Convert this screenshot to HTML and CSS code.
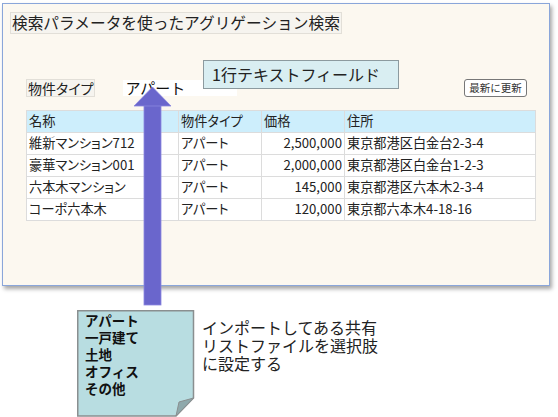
FILE: index.html
```html
<!DOCTYPE html>
<html lang="ja">
<head>
  <meta charset="UTF-8">
  <title>検索パラメータを使ったアグリゲーション検索</title>
  <link rel="stylesheet" href="styles.css">
</head>
<body>
  <!-- 画面パネル -->
  <div class="panel">
    <div class="title">検索パラメータを使ったアグリゲーション検索</div>

    <div class="search-row">
      <span class="label">物件タイプ</span>
      <span class="field">アパート</span>
      <button class="refresh">最新に更新</button>
    </div>

    <table class="result">
      <colgroup>
        <col class="c-name"><col class="c-type"><col class="c-price"><col class="c-addr">
      </colgroup>
      <thead>
        <tr><th>名称</th><th>物件タイプ</th><th>価格</th><th>住所</th></tr>
      </thead>
      <tbody>
        <tr><td>維新マンション712</td><td>アパート</td><td class="num">2,500,000</td><td>東京都港区白金台2-3-4</td></tr>
        <tr><td>豪華マンション001</td><td>アパート</td><td class="num">2,000,000</td><td>東京都港区白金台1-2-3</td></tr>
        <tr><td>六本木マンション</td><td>アパート</td><td class="num">145,000</td><td>東京都港区六本木2-3-4</td></tr>
        <tr><td>コーポ六本木</td><td>アパート</td><td class="num">120,000</td><td>東京都六本木4-18-16</td></tr>
      </tbody>
    </table>

    <!-- 吹き出し -->
    <div class="hint">1行テキストフィールド</div>
  </div>

  <!-- 矢印 -->
  <svg class="arrow" width="558" height="417" viewBox="0 0 558 417">
    <rect x="144" y="105" width="17" height="200" fill="#6a66cc" stroke="#8c88e0" stroke-width="0.8"/>
    <polygon points="152.5,87 134,106 171,106" fill="#6a66cc" stroke="#8c88e0" stroke-width="0.8"/>
  </svg>

  <div class="bottom">
    <div class="note">
      <svg class="note-shape" width="118" height="107" viewBox="0 0 118 107">
        <polygon points="0.75,0.75 116.5,0.75 116.5,88 99,106 0.75,106" fill="#b8dde1" stroke="#8a8f90" stroke-width="1.5"/>
        <polygon points="116.5,88 102,92 99,106" fill="#8fa9ac" stroke="#8a8f90" stroke-width="1"/>
      </svg>
      <div class="note-text">アパート<br>一戸建て<br>土地<br>オフィス<br>その他</div>
    </div>
    <p class="caption">インポートしてある共有<br>リストファイルを選択肢<br>に設定する</p>
  </div>
</body>
</html>
```

FILE: styles.css
```css
/* Grundlayout */
body, html {
  margin: 0;
  padding: 0;
  background: #fff;
}

body {
  width: 558px;
  height: 417px;
  overflow: hidden;
  position: relative;
  font-family: "Noto Sans CJK JP", "Noto Sans", sans-serif;
  color: #222;
}

/* Fenster */
.panel {
  position: relative;
  box-sizing: border-box;
  margin: 3px 0 0 2px;
  width: 548px;
  height: 283px;
  border: 1.5px solid #8aa6da;
  background: #fcf8f0;
  box-shadow: 2px 3px 4px rgba(0,0,0,0.35);
}

.title {
  display: inline-block;
  margin: 7.5px 0 0 7px;
  padding: 0 1px;
  font-size: 15.7px;
  line-height: 20px;
  background: #f6f4ef;
  border: 1px solid #e2dfd8;
}

.search-row {
  display: flex;
  align-items: center;
  margin: 45px 22px 0 23px;
  height: 18px;
}

.label {
  font-size: 14px;
  font-feature-settings: "palt";
  line-height: 16px;
  padding: 0 1px;
  background: #f6f4ef;
  border: 1px solid #e2dfd8;
}

.field {
  margin-left: 28px;
  width: 112px;
  height: 16px;
  padding-left: 2px;
  font-size: 15px;
  line-height: 16px;
  background: #fff;
  color: #111;
}

.refresh {
  margin-left: auto;
  width: 63px;
  height: 18px;
  padding: 0;
  font-family: inherit;
  font-size: 10.5px;
  line-height: 14px;
  color: #333;
  background: #fff;
  border: 1px solid #777;
  border-radius: 3px;
}

/* Tabelle */
.result {
  margin: 13px 0 0 23px;
  width: 509px;
  border-collapse: collapse;
  table-layout: fixed;
  font-size: 13.2px;
  font-feature-settings: "palt";
}

.c-name { width: 152px; }
.c-type { width: 83px; }
.c-price { width: 83px; }
.c-addr { width: 191px; }

.result th,
.result td {
  height: 21px;
  padding: 0 2px;
  border: 1px solid #dcdcdc;
  line-height: 20px;
  text-align: left;
  font-weight: normal;
  white-space: nowrap;
  overflow: hidden;
}

.result th {
  background: #cdeefc;
}

.result td {
  background: #fff;
}

.result td.num {
  text-align: right;
}

/* Tooltip */
.hint {
  position: absolute;
  left: 200px;
  top: 55.5px;
  box-sizing: border-box;
  width: 196px;
  height: 29px;
  padding-left: 8px;
  font-size: 16px;
  line-height: 27px;
  background: #d9eef2;
  border: 1px solid #8c9a9f;
}

.arrow {
  position: absolute;
  left: 0;
  top: 0;
  pointer-events: none;
}

/* Unterer Bereich */
.bottom {
  display: flex;
  margin: 24px 0 0 77px;
}

.note {
  position: relative;
  width: 118px;
  height: 107px;
}

.note-shape {
  position: absolute;
  left: 0;
  top: 0;
}

.note-text {
  position: relative;
  padding: 2px 0 0 8px;
  font-size: 13.5px;
  font-weight: bold;
  line-height: 17px;
  color: #111;
}

.caption {
  margin: 8px 0 0 7px;
  font-size: 16px;
  line-height: 18px;
  color: #222;
}
```
